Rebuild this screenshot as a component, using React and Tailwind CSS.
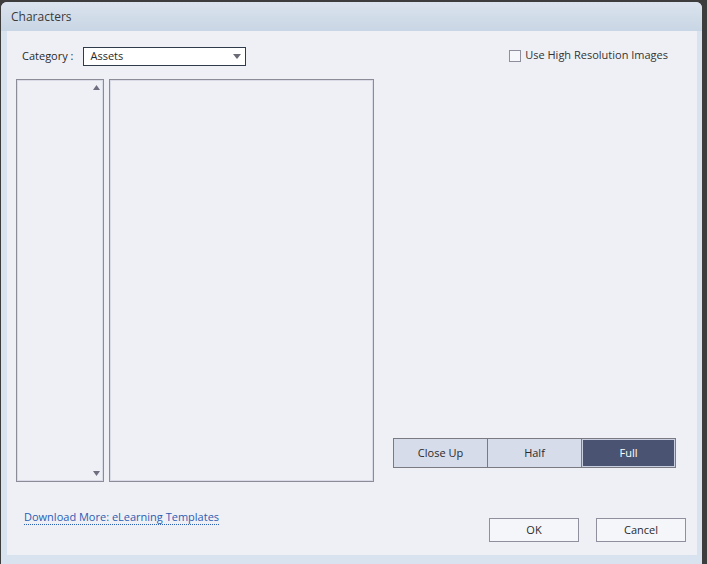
export default function App() {
  const font = { fontFamily: '"Open Sans", "Noto Sans", sans-serif' };
  return (
    <div className="w-[707px] h-[564px] bg-[#3d3d3d] overflow-hidden" style={font}>
      <div className="ml-[1px] mt-[2px] w-[701px] h-[562px] rounded-t-[6px] bg-[#d8e3ef] flex flex-col overflow-hidden">
        {/* title bar */}
        <div className="h-[29px] bg-gradient-to-b from-[#dbe4ee] to-[#c8d5e4] flex items-center pl-[10px] text-[12px] text-[#3a3a3a] shrink-0">
          Characters
        </div>
        {/* body */}
        <div className="ml-[6px] w-[690px] h-[524px] bg-[#eff0f6] flex flex-col text-[11px] text-[#2a2a2a]">
          {/* row A */}
          <div className="flex items-start pt-[16px] h-[48px]">
            <div className="flex items-center ml-[15px] h-[19px]">
              <span className="mr-[10px]">Category :</span>
              <div className="w-[163px] h-[19px] border border-[#2f3b4b] bg-white flex items-center justify-between pl-[6px] pr-[4px]">
                <span>Assets</span>
                <svg width="8" height="5" viewBox="0 0 8 5"><path d="M0 0 L8 0 L4 5 Z" fill="#6b6b78" /></svg>
              </div>
            </div>
            <div className="ml-auto mr-[29px] flex items-center h-[19px] -mt-[1px]">
              <div className="w-[12px] h-[12px] border border-[#8e8e9c] bg-[#f6f7fb] mr-[4px]" />
              <span className="text-[11px] text-[#333]">Use High Resolution Images</span>
            </div>
          </div>
          {/* row B */}
          <div className="flex h-[403px]">
            <div className="ml-[9px] w-[88px] h-full border border-[#8c8c99] shadow-[inset_0_0_0_1px_#d9dbe6] flex flex-col items-end justify-between pr-[3px] py-[5px]">
              <svg width="7" height="5" viewBox="0 0 7 5"><path d="M0 5 L7 5 L3.5 0 Z" fill="#6e6e80" /></svg>
              <svg width="7" height="5" viewBox="0 0 7 5"><path d="M0 0 L7 0 L3.5 5 Z" fill="#6e6e80" /></svg>
            </div>
            <div className="ml-[5px] w-[265px] h-full border border-[#8c8c99] shadow-[inset_0_0_0_1px_#d9dbe6]" />
            <div className="ml-[19px] flex flex-col justify-end pb-[14px]">
              <div className="flex h-[30px] w-[283px] border border-[#7a7a82]">
                <div className="w-[94px] h-full bg-[#d6dcea] border-r border-[#7a7a82] flex items-center justify-center text-[#2a2a2a]">Close Up</div>
                <div className="w-[94px] h-full bg-[#d6dcea] border-r border-[#7a7a82] flex items-center justify-center text-[#2a2a2a]">Half</div>
                <div className="flex-1 h-full bg-[#4a5472] shadow-[inset_0_0_0_1px_#c9cfe0] flex items-center justify-center text-white">Full</div>
              </div>
            </div>
          </div>
          {/* row C */}
          <div className="flex items-start pt-[25px]">
            <span className="ml-[17px] mt-[3px] text-[#2b5db3] border-b border-dotted border-[#2b5db3] leading-[14px]">Download More: eLearning Templates</span>
            <div className="ml-auto mr-[11px] mt-[11px] flex gap-[17px]">
              <div className="w-[90px] h-[24px] border border-[#8f8f9d] bg-[#f5f6fa] flex items-center justify-center">OK</div>
              <div className="w-[90px] h-[24px] border border-[#8f8f9d] bg-[#f5f6fa] flex items-center justify-center">Cancel</div>
            </div>
          </div>
        </div>
      </div>
    </div>
  );
}
